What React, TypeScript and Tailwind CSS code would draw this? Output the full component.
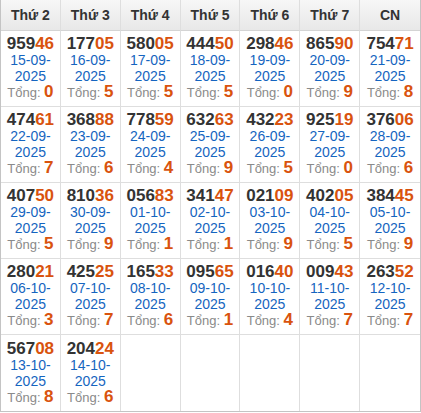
const days = ['Thứ 2', 'Thứ 3', 'Thứ 4', 'Thứ 5', 'Thứ 6', 'Thứ 7', 'CN'];

const results: [string, string, number][] = [
  ['95946', '15-09', 0],
  ['17705', '16-09', 5],
  ['58005', '17-09', 5],
  ['44450', '18-09', 5],
  ['29846', '19-09', 0],
  ['86590', '20-09', 9],
  ['75471', '21-09', 8],
  ['47461', '22-09', 7],
  ['36888', '23-09', 6],
  ['77859', '24-09', 4],
  ['63263', '25-09', 9],
  ['43223', '26-09', 5],
  ['92519', '27-09', 0],
  ['37606', '28-09', 6],
  ['40750', '29-09', 5],
  ['81036', '30-09', 9],
  ['05683', '01-10', 1],
  ['34147', '02-10', 1],
  ['02109', '03-10', 9],
  ['40205', '04-10', 5],
  ['38445', '05-10', 9],
  ['28021', '06-10', 3],
  ['42525', '07-10', 7],
  ['16533', '08-10', 6],
  ['09565', '09-10', 1],
  ['01640', '10-10', 4],
  ['00943', '11-10', 7],
  ['26352', '12-10', 7],
  ['56708', '13-10', 8],
  ['20424', '14-10', 6],
];

export default function App() {
  const cells: ([string, string, number] | null)[] = [...results];
  while (cells.length < 35) cells.push(null);

  return (
    <div className="w-[421px] bg-white font-['Liberation_Sans',Arial,sans-serif]">
      <div className="grid grid-cols-7 border-x border-b border-[#c4c4c4]">
        {days.map((d, i) => (
          <div
            key={d}
            className={`h-[31px] flex items-center justify-center border-b border-[#d4d4d4] bg-gradient-to-b from-[#f7f7f7] to-[#e8e8e8] text-[14px] font-bold text-[#333] ${
              i < 6 ? 'border-r border-r-[#dedede]' : ''
            }`}
          >
            {d}
          </div>
        ))}
        {cells.map((c, i) => (
          <div
            key={i}
            className={`h-[76px] flex flex-col items-center justify-center text-center ${
              i % 7 < 6 ? 'border-r border-[#dedede]' : ''
            } ${i < 28 ? 'border-b border-b-[#dedede]' : ''}`}
          >
            {c && (
              <>
                <div className="text-[17px] leading-4 font-bold text-[#333]">
                  {c[0].slice(0, 3)}
                  <span className="text-[#d9530e]">{c[0].slice(3)}</span>
                </div>
                <div className="text-[14px] leading-4 text-[#1565c0]">
                  {c[1]}-
                  <br />
                  2025
                </div>
                <div className="leading-4 whitespace-nowrap">
                  <span className="text-[13px] text-[#8a8a8a]">Tổng: </span>
                  <span className="text-[17px] font-bold text-[#d9530e]">{c[2]}</span>
                </div>
              </>
            )}
          </div>
        ))}
      </div>
    </div>
  );
}
